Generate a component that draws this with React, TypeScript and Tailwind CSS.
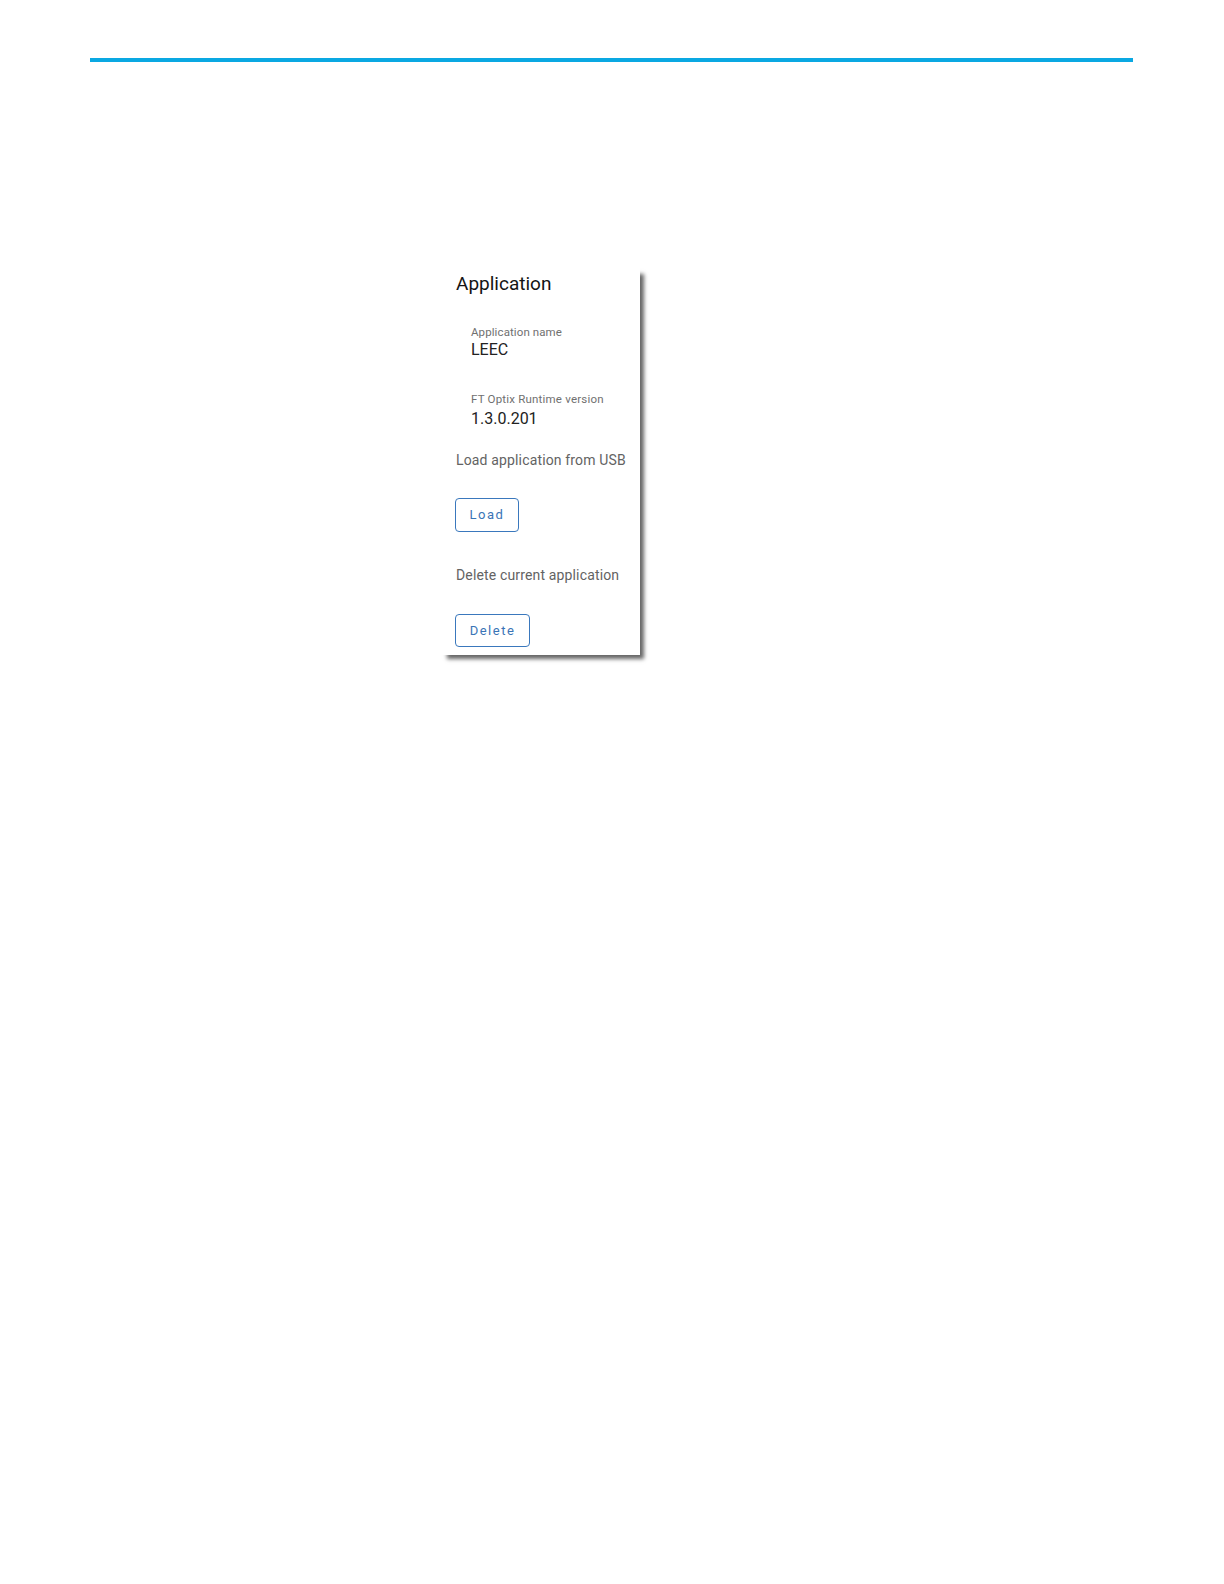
export default function App() {
  return (
    <div className="min-h-[1584px] bg-white font-['Roboto',_'Liberation_Sans',_sans-serif]">
      <div className="ml-[90px] mt-[58px] h-[4px] w-[1043px] bg-[#0aa8e2]" />

      <div className="ml-[441px] mt-[206px] w-[199px] bg-white pl-[15px] pt-[4px] pb-[8px] shadow-[5px_5px_4px_-1px_rgba(0,0,0,0.6)]">
        <h2 className="text-[19px] leading-[24px] text-[#141414]">Application</h2>

        <div className="pl-[15px]">
          <div className="mt-[30px] text-[11.5px] leading-[13px] tracking-[0.1px] text-[#707070]">Application name</div>
          <div className="mt-[1px] text-[16px] leading-[19px] text-[#222]">LEEC</div>

          <div className="mt-[34px] text-[11.5px] leading-[13px] tracking-[0.2px] text-[#707070]">FT Optix Runtime version</div>
          <div className="mt-[3px] text-[16px] leading-[19px] text-[#222]">1.3.0.201</div>
        </div>

        <div className="mt-[24px] text-[14px] leading-[17px] tracking-[0.15px] text-[#636363]">Load application from USB</div>
        <button className="-ml-px mt-[29px] flex h-[34px] w-[64px] items-center justify-center rounded-[4px] border border-[#3a78bd] text-[13px] tracking-[1.5px] text-[#3a74b6]">
          Load
        </button>

        <div className="mt-[35px] text-[14px] leading-[17px] tracking-[0.15px] text-[#636363]">Delete current application</div>
        <button className="-ml-px mt-[30px] flex h-[33px] w-[75px] items-center justify-center rounded-[4px] border border-[#3a78bd] text-[13px] tracking-[1.5px] text-[#3a74b6]">
          Delete
        </button>
      </div>
    </div>
  );
}
